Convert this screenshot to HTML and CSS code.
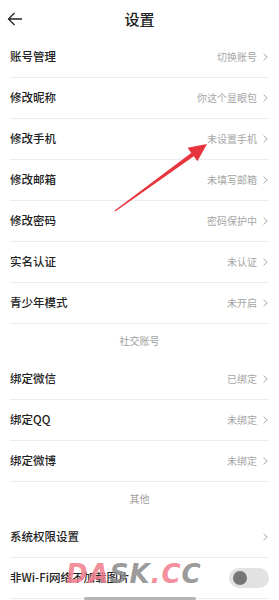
FILE: index.html
```html
<!DOCTYPE html>
<html lang="zh-CN">
<head>
<meta charset="utf-8">
<title>设置</title>
<link rel="stylesheet" href="styles.css">
</head>
<body>
<div class="page">
  <header class="topbar">
    <svg class="back" width="16" height="14" viewBox="0 0 16 14"><path d="M15 7H1.5M7.5 1L1.5 7l6 6" fill="none" stroke="#222" stroke-width="1.3"/></svg>
    <h1 class="title">设置</h1>
  </header>

  <div class="list">
    <div class="row"><span class="label">账号管理</span><span class="value">切换账号</span><svg class="chev" width="5" height="8" viewBox="0 0 5 8"><path d="M0.6 0.6L4.2 4 0.6 7.4" fill="none" stroke="#aaa" stroke-width="1"/></svg></div>
    <div class="row"><span class="label">修改昵称</span><span class="value">你这个显眼包</span><svg class="chev" width="5" height="8" viewBox="0 0 5 8"><path d="M0.6 0.6L4.2 4 0.6 7.4" fill="none" stroke="#aaa" stroke-width="1"/></svg></div>
    <div class="row"><span class="label">修改手机</span><span class="value">未设置手机</span><svg class="chev" width="5" height="8" viewBox="0 0 5 8"><path d="M0.6 0.6L4.2 4 0.6 7.4" fill="none" stroke="#aaa" stroke-width="1"/></svg></div>
    <div class="row"><span class="label">修改邮箱</span><span class="value">未填写邮箱</span><svg class="chev" width="5" height="8" viewBox="0 0 5 8"><path d="M0.6 0.6L4.2 4 0.6 7.4" fill="none" stroke="#aaa" stroke-width="1"/></svg></div>
    <div class="row"><span class="label">修改密码</span><span class="value">密码保护中</span><svg class="chev" width="5" height="8" viewBox="0 0 5 8"><path d="M0.6 0.6L4.2 4 0.6 7.4" fill="none" stroke="#aaa" stroke-width="1"/></svg></div>
    <div class="row"><span class="label">实名认证</span><span class="value">未认证</span><svg class="chev" width="5" height="8" viewBox="0 0 5 8"><path d="M0.6 0.6L4.2 4 0.6 7.4" fill="none" stroke="#aaa" stroke-width="1"/></svg></div>
    <div class="row"><span class="label">青少年模式</span><span class="value">未开启</span><svg class="chev" width="5" height="8" viewBox="0 0 5 8"><path d="M0.6 0.6L4.2 4 0.6 7.4" fill="none" stroke="#aaa" stroke-width="1"/></svg></div>
  </div>

  <div class="section">社交账号</div>
  <div class="list">
    <div class="row"><span class="label">绑定微信</span><span class="value">已绑定</span><svg class="chev" width="5" height="8" viewBox="0 0 5 8"><path d="M0.6 0.6L4.2 4 0.6 7.4" fill="none" stroke="#aaa" stroke-width="1"/></svg></div>
    <div class="row"><span class="label">绑定QQ</span><span class="value">未绑定</span><svg class="chev" width="5" height="8" viewBox="0 0 5 8"><path d="M0.6 0.6L4.2 4 0.6 7.4" fill="none" stroke="#aaa" stroke-width="1"/></svg></div>
    <div class="row"><span class="label">绑定微博</span><span class="value">未绑定</span><svg class="chev" width="5" height="8" viewBox="0 0 5 8"><path d="M0.6 0.6L4.2 4 0.6 7.4" fill="none" stroke="#aaa" stroke-width="1"/></svg></div>
  </div>

  <div class="section">其他</div>
  <div class="list">
    <div class="row"><span class="label">系统权限设置</span><svg class="chev" width="5" height="8" viewBox="0 0 5 8"><path d="M0.6 0.6L4.2 4 0.6 7.4" fill="none" stroke="#aaa" stroke-width="1"/></svg></div>
    <div class="row"><span class="label">非Wi-Fi网络不加载图片</span><span class="toggle"><span class="knob"></span></span></div>
  </div>

  <svg class="arrow" width="279" height="600" viewBox="0 0 279 600">
    <polygon points="115.3,211.5 114.6,210.5 191.2,153 187.6,147.8 207,144 197.4,161.2 193.8,156.3" fill="#e8343c"/>
  </svg>

  <div class="watermark"><span class="wm-pink">DA</span><span class="wm-gray">SK</span><span class="wm-pink">.C</span><span class="wm-gray">C</span></div>
  <div class="navbar"></div>
</div>
</body>
</html>
```

FILE: styles.css
```css
* { box-sizing: border-box; }
html, body {
  margin: 0;
  padding: 0;
  background: #fff;
}
body {
  font-family: "Noto Sans CJK SC", "Noto Sans", sans-serif;
  color: #222;
}
.page {
  position: relative;
  width: 279px;
  height: 600px;
  overflow: hidden;
}
.topbar {
  position: relative;
  height: 37px;
  display: flex;
  align-items: center;
  justify-content: center;
}
.back {
  position: absolute;
  left: 7px;
  top: 12px;
}
.title {
  margin: 0;
  font-size: 15px;
  font-weight: 500;
  line-height: 1;
  padding-bottom: 0;
}
.list {
  padding: 0 10px;
}
.row {
  height: 41px;
  display: flex;
  align-items: center;
  border-bottom: 1px solid #ececec;
}
.label {
  flex: 1;
  font-size: 11.5px;
  font-weight: 500;
  color: #222;
  line-height: 1;
}
.value {
  font-size: 10px;
  color: #a6a6a6;
  line-height: 1;
  margin-right: 6px;
}
.chev {
  margin-right: 1px;
  display: block;
}
.section {
  height: 35px;
  display: flex;
  align-items: center;
  justify-content: center;
  font-size: 10px;
  color: #a0a0a0;
  padding-bottom: 2px;
}
.toggle {
  width: 40px;
  height: 20px;
  border-radius: 10px;
  background: #e2e2e2;
  display: flex;
  align-items: center;
  padding-left: 4px;
}
.knob {
  width: 14px;
  height: 14px;
  border-radius: 50%;
  background: #767676;
}
.arrow {
  position: absolute;
  left: 0;
  top: 0;
  pointer-events: none;
}
.watermark {
  position: absolute;
  left: 66px;
  top: 561px;
  font-family: "DejaVu Sans", sans-serif;
  font-weight: bold;
  font-style: italic;
  font-size: 26px;
  line-height: 1;
  letter-spacing: 1px;
  opacity: 0.85;
}
.wm-pink { color: #f27d8e; }
.wm-gray { color: #8a8a8a; }
.navbar {
  position: absolute;
  left: 84px;
  top: 597px;
  width: 112px;
  height: 3px;
  border-radius: 2px;
  background: #b5b5b5;
}
```
